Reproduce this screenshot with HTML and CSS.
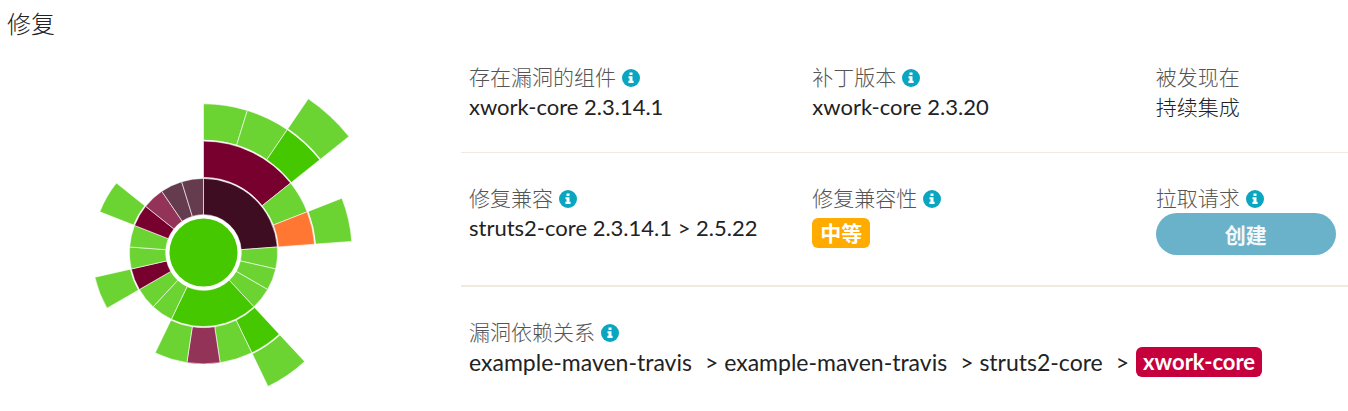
FILE: index.html
```html
<!DOCTYPE html>
<html lang="zh-CN">
<head>
    <meta charset="UTF-8">
    <meta name="viewport" content="width=device-width, initial-scale=1.0">
    <title>修复</title>
    <link rel="stylesheet" href="styles.css">
</head>
<body>
    <svg width="0" height="0" class="symbols" aria-hidden="true">
        <symbol id="info" viewBox="0 0 18 18">
            <circle cx="9" cy="9" r="9" fill="#0aa5c0"/>
            <path fill="#fff" d="M7.5 3.4h3v2.7h-3zM6.5 7.2h4v4.6h1.1v2.1H6.4v-2.1h1.1V9.3h-1z"/>
        </symbol>
    </svg>
    <div class="panel">
        <div class="chart-side">
            <h2>修复</h2>
            <svg id="sunburst" class="sunburst" viewBox="-109.5 -154.5 262 292"></svg>
        </div>
        <div class="details">
            <div class="row">
                <div class="cell">
                    <div class="label">存在漏洞的组件 <svg class="info"><use href="#info"/></svg></div>
                    <div class="value">xwork-core 2.3.14.1</div>
                </div>
                <div class="cell">
                    <div class="label">补丁版本 <svg class="info"><use href="#info"/></svg></div>
                    <div class="value">xwork-core 2.3.20</div>
                </div>
                <div class="cell">
                    <div class="label">被发现在</div>
                    <div class="value stage">持续集成</div>
                </div>
            </div>
            <div class="row">
                <div class="cell">
                    <div class="label">修复兼容 <svg class="info"><use href="#info"/></svg></div>
                    <div class="value">struts2-core 2.3.14.1 &gt; 2.5.22</div>
                </div>
                <div class="cell">
                    <div class="label">修复兼容性 <svg class="info"><use href="#info"/></svg></div>
                    <span class="badge medium">中等</span>
                </div>
                <div class="cell">
                    <div class="label">拉取请求 <svg class="info"><use href="#info"/></svg></div>
                    <button class="create" type="button">创建</button>
                </div>
            </div>
            <div class="row path-row">
                <div class="cell">
                    <div class="label">漏洞依赖关系 <svg class="info"><use href="#info"/></svg></div>
                    <div class="value path">
                        <span>example-maven-travis</span>
                        <span>&gt; example-maven-travis</span>
                        <span>&gt; struts2-core</span>
                        <span>&gt;</span>
                        <span class="badge critical">xwork-core</span>
                    </div>
                </div>
            </div>
        </div>
    </div>

    <script>
        const ringWidth = 37.3;
        const leaves = 21;
        // [ring, first leaf, last leaf, color]
        const slices = [
            [1, 0, 5, '#3f0d21'],
            [1, 5, 6, '#6bd433'],
            [1, 6, 7, '#6bd433'],
            [1, 7, 8, '#6bd433'],
            [1, 8, 12, '#46c800'],
            [1, 12, 13, '#6bd433'],
            [1, 13, 14, '#6bd433'],
            [1, 14, 15, '#78002e'],
            [1, 15, 16, '#6bd433'],
            [1, 16, 17, '#6bd433'],
            [1, 17, 18, '#78002e'],
            [1, 18, 19, '#933358'],
            [1, 19, 20, '#653c4d'],
            [1, 20, 21, '#653c4d'],
            [2, 0, 3, '#78002e'],
            [2, 3, 4, '#6bd433'],
            [2, 4, 5, '#ff7733'],
            [2, 8, 9, '#46c800'],
            [2, 9, 10, '#6bd433'],
            [2, 10, 11, '#933358'],
            [2, 11, 12, '#6bd433'],
            [2, 14, 15, '#6bd433'],
            [2, 17, 18, '#6bd433'],
            [3, 0, 1, '#6bd433'],
            [3, 1, 2, '#6bd433'],
            [3, 2, 3, '#46c800'],
            [3, 4, 5, '#6bd433'],
            [3, 8, 9, '#6bd433'],
            [4, 2, 3, '#6bd433']
        ];

        function point(radius, leaf) {
            const angle = leaf / leaves * 2 * Math.PI;
            return (radius * Math.sin(angle)).toFixed(2) + ' ' + (-radius * Math.cos(angle)).toFixed(2);
        }

        function slicePath(ring, from, to) {
            const inner = ring * ringWidth + 0.5;
            const outer = (ring + 1) * ringWidth - 0.5;
            return `M${point(inner, from)}L${point(outer, from)}A${outer} ${outer} 0 0 1 ${point(outer, to)}` +
                `L${point(inner, to)}A${inner} ${inner} 0 0 0 ${point(inner, from)}Z`;
        }

        document.getElementById('sunburst').innerHTML =
            '<circle r="34" fill="#46c800"/>' +
            slices.map(([ring, from, to, color]) => `<path d="${slicePath(ring, from, to)}" fill="${color}"/>`).join('');
    </script>
</body>
</html>
```
FILE: styles.css
```css
body {
    margin: 0;
    background: #fff;
    color: #222;
    font-family: Lato, "Noto Sans CJK SC", sans-serif;
    font-size: 22px;
    line-height: 30px;
}
.symbols {
    position: absolute;
}
.panel {
    display: flex;
}
.chart-side {
    flex: 0 0 34.2%;
}
h2 {
    margin: 9px 0 0 7px;
    font-size: 24px;
    font-weight: 300;
    line-height: 30px;
}
.sunburst {
    display: block;
    width: 262px;
    height: 292px;
    margin: 59px 0 0 94px;
    overflow: visible;
}
.sunburst path {
    stroke: #fff;
    stroke-width: 0.6;
}
.details {
    flex: 1;
    padding-top: 32px;
}
.row {
    display: grid;
    grid-template-columns: 12fr 12fr 7fr;
    padding: 30px 0;
    border-bottom: 2px solid #f0e9e0;
}
.row:first-child {
    border-bottom-width: 1px;
}
.path-row {
    grid-template-columns: 1fr;
    padding-bottom: 0;
    border-bottom: none;
}
.cell {
    padding: 0 12px 0 8px;
}
.label {
    display: flex;
    align-items: center;
    gap: 6px;
    height: 30px;
    color: #555;
    font-size: 21px;
    font-weight: 300;
}
.info {
    width: 18px;
    height: 18px;
    margin-top: 2px;
}
.stage {
    font-size: 21px;
    font-weight: 300;
}
.badge {
    display: inline-block;
    border-radius: 6px;
    color: #fff;
    font-weight: 700;
}
.medium {
    padding: 0 8px;
    margin-top: 5px;
    background: #ffab00;
    font-size: 21px;
}
.critical {
    padding: 0 7px;
    margin-left: -6px;
    background: #c5003c;
    font-size: 22px;
}
.create {
    display: block;
    width: 100%;
    height: 42px;
    border: none;
    border-radius: 21px;
    background: #69b2c9;
    color: #f4f8fa;
    font-family: inherit;
    font-size: 21px;
    font-weight: 700;
    cursor: pointer;
}
.path {
    display: flex;
    flex-wrap: wrap;
    gap: 0 13px;
    font-size: 23px;
}
```
